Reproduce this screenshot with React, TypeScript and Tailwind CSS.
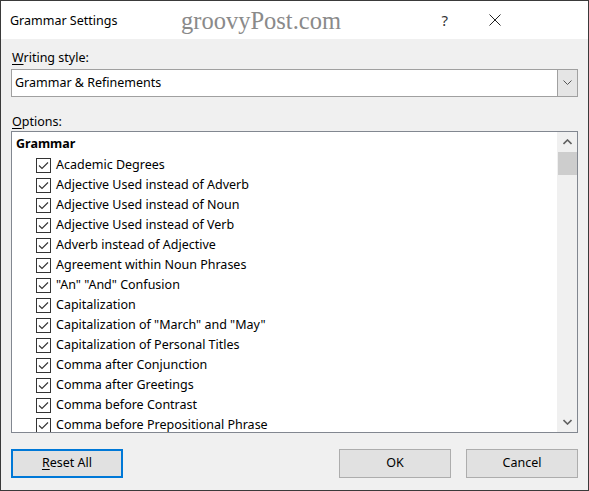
import React from "react";

const items = [
  "Academic Degrees",
  "Adjective Used instead of Adverb",
  "Adjective Used instead of Noun",
  "Adjective Used instead of Verb",
  "Adverb instead of Adjective",
  "Agreement within Noun Phrases",
  "\"An\" \"And\" Confusion",
  "Capitalization",
  "Capitalization of \"March\" and \"May\"",
  "Capitalization of Personal Titles",
  "Comma after Conjunction",
  "Comma after Greetings",
  "Comma before Contrast",
  "Comma before Prepositional Phrase",
];

function CheckBox() {
  return (
    <svg width="15" height="15" viewBox="0 0 15 15" className="shrink-0">
      <rect x="0.5" y="0.5" width="14" height="14" fill="#fff" stroke="#333" />
      <path d="M3 7.5 L6 10.5 L12 4.5" fill="none" stroke="#333" strokeWidth="1.1" />
    </svg>
  );
}

export default function App() {
  return (
    <div
      className="w-[589px] h-[491px] border border-[#3a3a3a] bg-[#f0f0f0] flex flex-col text-black text-[12.5px]"
      style={{ fontFamily: '"Noto Sans", "Segoe UI", sans-serif' }}
    >
      {/* title bar */}
      <div className="h-[38px] bg-white flex items-center shrink-0 relative">
        <span className="ml-[9px] mt-[2px] text-[12.5px]">Grammar Settings</span>
        <span
          className="absolute left-[180px] top-[2px] text-[24.5px] text-[#8a8a8a]"
          style={{ fontFamily: '"Liberation Serif", "DejaVu Serif", serif' }}
        >
          groovyPost.com
        </span>
        <span className="ml-auto mr-[41px] text-[15px] text-[#333]">?</span>
        <svg width="12" height="12" viewBox="0 0 12 12" className="mr-[87px]">
          <path d="M0.5 0.5 L11.5 11.5 M11.5 0.5 L0.5 11.5" stroke="#222" strokeWidth="1" />
        </svg>
      </div>

      <div className="flex flex-col px-[10px] pt-[11px]">
        <div className="leading-[16px] ml-[1px]">
          <span className="underline underline-offset-2">W</span>riting style:
        </div>
        <div className="mt-[3px] h-[28px] border border-[#a0a0a0] bg-white flex items-stretch">
          <div className="flex-1 flex items-center pl-[3px]">Grammar &amp; Refinements</div>
          <div className="w-[20px] bg-[#e5e5e5] border-l border-[#a0a0a0] flex items-center justify-center">
            <svg width="9" height="6" viewBox="0 0 9 6">
              <path d="M0.5 0.5 L4.5 4.5 L8.5 0.5" fill="none" stroke="#555" />
            </svg>
          </div>
        </div>

        <div className="mt-[17px] leading-[16px] ml-[1px]">
          <span className="underline underline-offset-2">O</span>ptions:
        </div>
        <div className="mt-[1px] h-[302px] border border-[#828790] bg-white flex overflow-hidden">
          <div className="flex-1 flex flex-col pl-[4px] pt-[2px] overflow-hidden">
            <div className="font-bold h-[21px] shrink-0 flex items-center">Grammar</div>
            {items.map((t) => (
              <div key={t} className="h-[20px] shrink-0 flex items-center pl-[20px] gap-[5px]">
                <CheckBox />
                <span>{t}</span>
              </div>
            ))}
          </div>
          <div className="w-[20px] bg-[#f0f0f0] flex flex-col items-center">
            <div className="h-[20px] flex items-center justify-center">
              <svg width="9" height="6" viewBox="0 0 9 6">
                <path d="M0.5 5 L4.5 1 L8.5 5" fill="none" stroke="#606060" strokeWidth="1.6" />
              </svg>
            </div>
            <div className="w-[19px] h-[23px] bg-[#cdcdcd]" />
            <div className="flex-1" />
            <div className="h-[20px] flex items-center justify-center">
              <svg width="9" height="6" viewBox="0 0 9 6">
                <path d="M0.5 1 L4.5 5 L8.5 1" fill="none" stroke="#606060" strokeWidth="1.6" />
              </svg>
            </div>
          </div>
        </div>

        <div className="mt-[16px] flex">
          <div className="w-[112px] h-[29px] border-2 border-[#0078d7] bg-[#e1e1e1] flex items-center justify-center">
            <span>
              <span className="underline underline-offset-2">R</span>eset All
            </span>
          </div>
          <div className="ml-auto w-[112px] h-[29px] border border-[#adadad] bg-[#e1e1e1] flex items-center justify-center">
            OK
          </div>
          <div className="ml-[15px] w-[112px] h-[29px] border border-[#adadad] bg-[#e1e1e1] flex items-center justify-center">
            Cancel
          </div>
        </div>
      </div>
    </div>
  );
}
